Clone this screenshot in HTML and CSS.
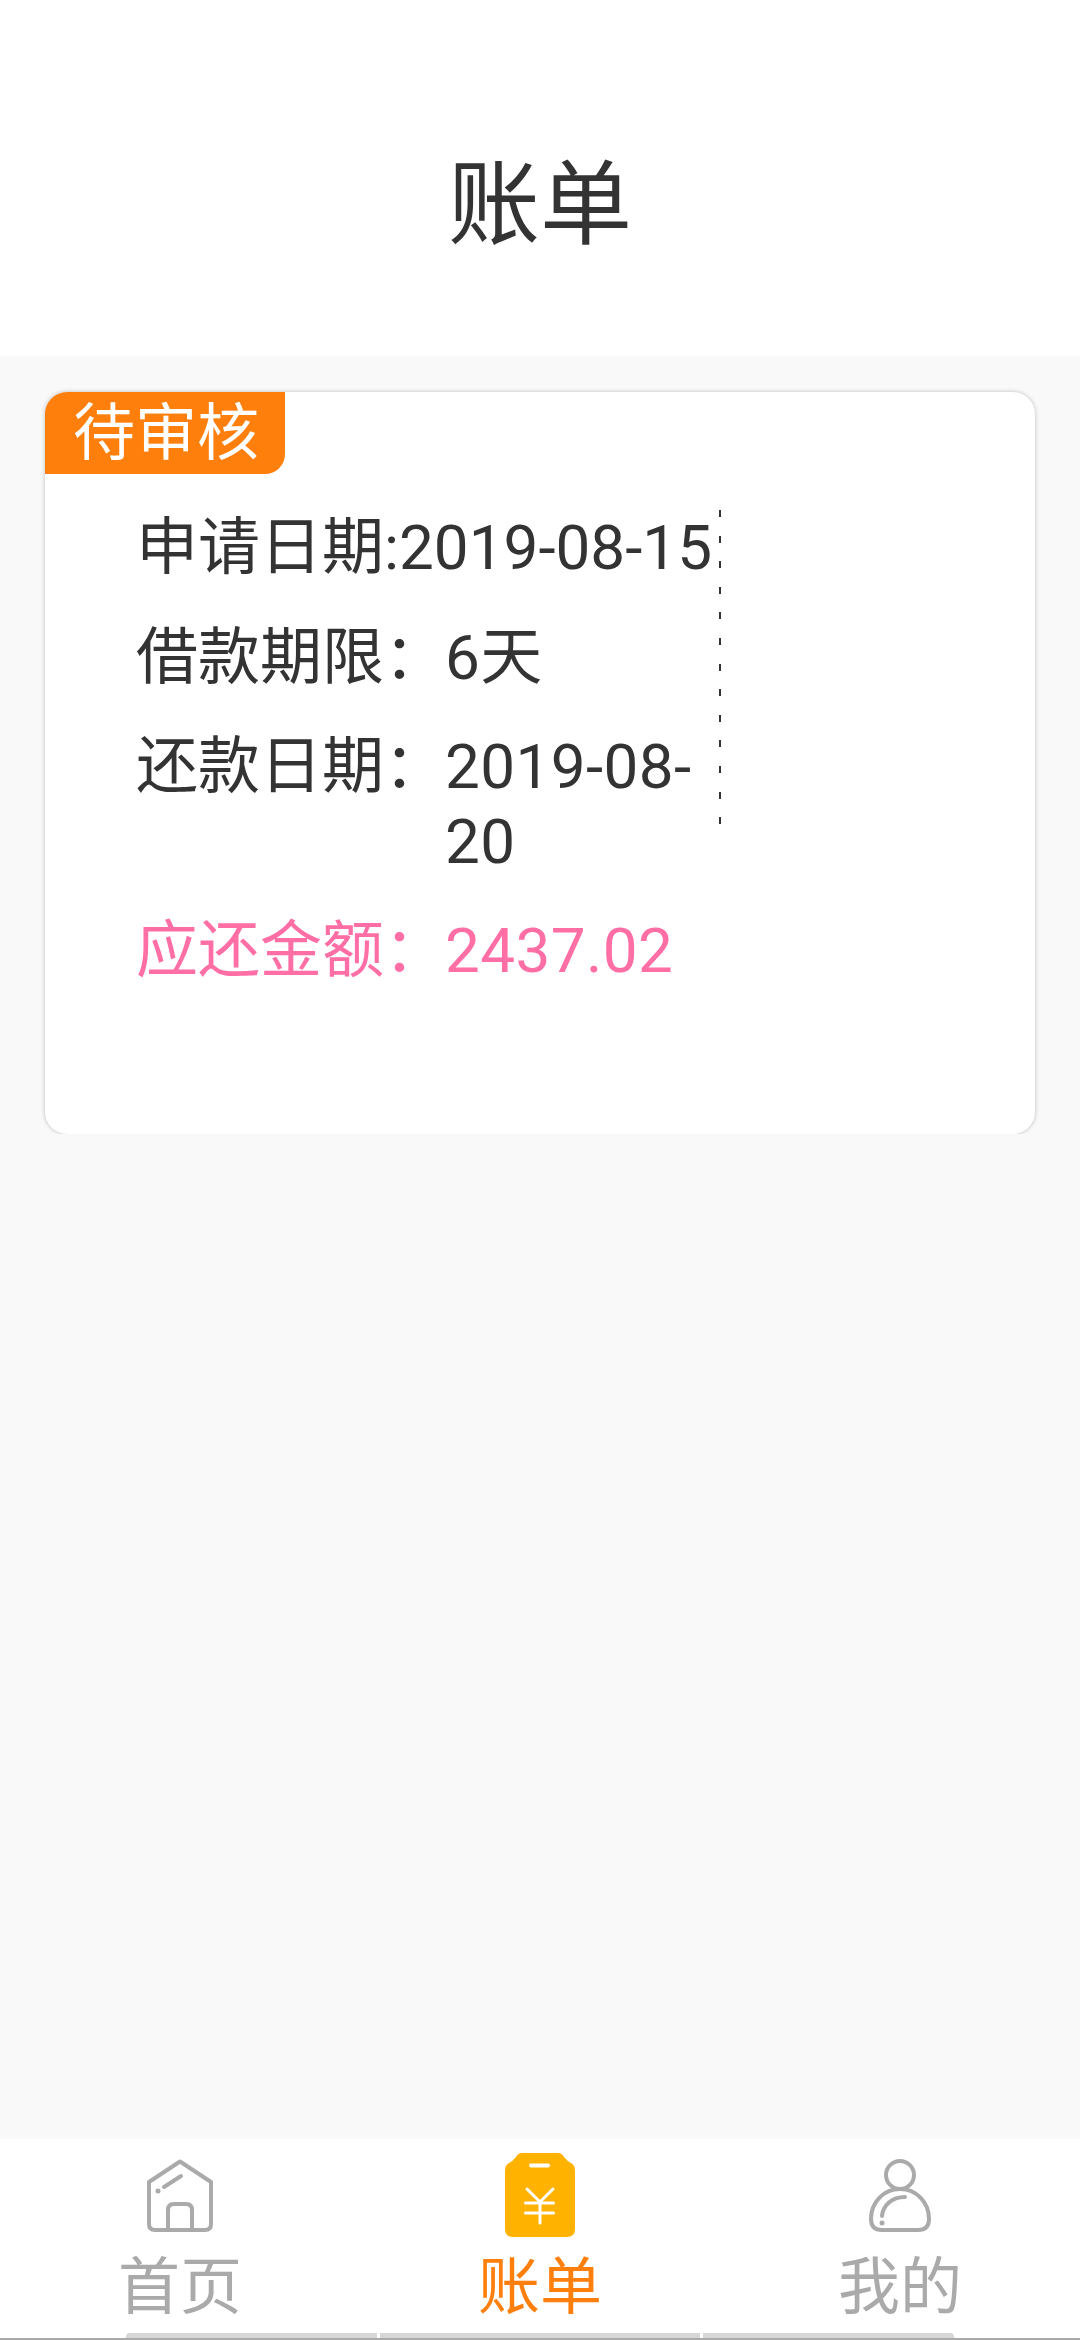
FILE: index.html
```html
<!DOCTYPE html>
<html lang="zh-CN">

<head>
    <meta charset="UTF-8">
    <meta name="viewport" content="width=device-width, initial-scale=1.0">
    <title>账单</title>
    <link rel="stylesheet" href="styles.css">
</head>

<body>
    <header class="top-bar">
        <h1>账单</h1>
    </header>

    <main class="content">
        <div class="card-clip">
            <div class="card">
                <div class="tag">待审核</div>
                <div class="divider"></div>
                <div class="info">
                    <p class="row-inline">申请日期:2019-08-15</p>
                    <div class="row">
                        <span class="label">借款期限：</span>
                        <span class="value">6天</span>
                    </div>
                    <div class="row">
                        <span class="label">还款日期：</span>
                        <span class="value">2019-08-20</span>
                    </div>
                    <div class="row row-pink">
                        <span class="label">应还金额：</span>
                        <span class="value">2437.02</span>
                    </div>
                </div>
            </div>
        </div>
    </main>

    <footer class="tab-bar">
        <div class="tabs">
            <div class="tab">
                <svg class="tab-icon" viewBox="0 0 80 84">
                    <path d="M9 29 L40 8.500 L71 29 V71 Q71 77 65 77 H15 Q9 77 9 71 Z" fill="none" stroke="#aaa" stroke-width="4" stroke-linejoin="round" />
                    <path d="M28 77 V57 Q28 51 34 51 H46 Q52 51 52 57 V77" fill="none" stroke="#aaa" stroke-width="4" />
                    <path d="M24 34 L41 23" fill="none" stroke="#aaa" stroke-width="4" stroke-linecap="round" />
                    <circle cx="18" cy="38" r="2.500" fill="#aaa" />
                </svg>
                <span>首页</span>
            </div>
            <div class="tab tab-active">
                <svg class="tab-icon" viewBox="0 0 80 84">
                    <path d="M22 0 H58 Q62 0 64 4 Q67 8 71 10 Q75 12 75 18 V76 Q75 84 67 84 H13 Q5 84 5 76 V18 Q5 12 9 10 Q13 8 16 4 Q18 0 22 0 Z" fill="#ffb300" />
                    <path d="M31 12.500 H48" fill="none" stroke="#fff" stroke-width="4" stroke-linecap="round" />
                    <path d="M27 36 L40 49 L53 36 M25.500 50 H53.500 M25.500 60 H53.500 M40 49 V70" fill="none" stroke="#fff" stroke-width="3" stroke-linecap="round" />
                </svg>
                <span>账单</span>
            </div>
            <div class="tab">
                <svg class="tab-icon" viewBox="0 0 80 84">
                    <circle cx="40" cy="22" r="14" fill="none" stroke="#aaa" stroke-width="4" />
                    <path d="M22 77 Q11 77 11 66 C11 49 24 36 40 36 C56 36 69 49 69 66 Q69 77 58 77 Z" fill="none" stroke="#aaa" stroke-width="4" />
                    <path d="M45 44 C31 44 23 53 22 63" fill="none" stroke="#aaa" stroke-width="4" stroke-linecap="round" />
                    <circle cx="22" cy="70" r="2.500" fill="#aaa" />
                </svg>
                <span>我的</span>
            </div>
        </div>
        <div class="home-strip">
            <div class="seg seg-left"></div>
            <div class="seg seg-mid"></div>
            <div class="seg seg-right"></div>
        </div>
    </footer>
</body>

</html>
```

FILE: styles.css
```css
/* General Styles */
body {
    margin: 0;
    width: 1080px;
    height: 2340px;
    display: flex;
    flex-direction: column;
    font-family: Roboto, "Noto Sans CJK SC", sans-serif;
    color: #333;
    background-color: #f9f9f9;
}

p {
    margin: 0;
}

/* Header */
.top-bar {
    height: 356px;
    box-sizing: border-box;
    padding-top: 151px;
    background: #ffffff;
    text-align: center;
}

.top-bar h1 {
    margin: 0;
    font-size: 92px;
    font-weight: normal;
    line-height: 110px;
}

/* Card */
.content {
    flex: 1;
    padding: 30px 39px 0;
}

/* the shadow is cut off under the card */
.card-clip {
    padding: 6px 6px 0;
    overflow: hidden;
}

.card {
    position: relative;
    height: 742px;
    background: #ffffff;
    border-radius: 22px;
    box-shadow: 0 0 4px rgba(0, 0, 0, 0.25);
    overflow: hidden;
}

.tag {
    width: 240px;
    height: 82px;
    box-sizing: border-box;
    padding-left: 28px;
    background-color: #ff7f0c;
    border-bottom-right-radius: 20px;
    color: #ffffff;
    font-size: 62px;
    line-height: 84px;
}

.divider {
    position: absolute;
    top: 118px;
    left: 674px;
    width: 2px;
    height: 314px;
    background: repeating-linear-gradient(#333 0, #333 7px, transparent 7px, transparent 25.6px);
}

.info {
    margin-top: 36px;
    padding-left: 91px;
    font-size: 62px;
    line-height: 75px;
}

.row-inline {
    white-space: nowrap;
}

.row {
    display: flex;
    margin-top: 35px;
}

.row + .row {
    margin-top: 34px;
}

.label {
    flex: none;
    width: 309px;
    white-space: nowrap;
}

.value {
    width: 262px;
    letter-spacing: 0.4px;
}

.row-pink {
    color: #ff6fa6;
}

/* Bottom tabs */
.tab-bar {
    height: 201px;
    background: #ffffff;
}

.tabs {
    display: flex;
    height: 194px;
}

.tab {
    flex: 1;
    display: flex;
    flex-direction: column;
    align-items: center;
    padding-top: 14px;
    box-sizing: border-box;
    font-size: 62px;
    line-height: 75px;
    color: #aaa;
}

.tab-active {
    color: #ff7f0c;
}

.tab-icon {
    width: 80px;
    height: 84px;
    margin-bottom: 13px;
}

.home-strip {
    display: flex;
    gap: 3px;
    height: 5px;
    padding-left: 126px;
    border-bottom: 2px solid #aaa;
}

.seg {
    height: 5px;
    background-color: #d6d6d6;
}

.seg-left {
    width: 251px;
    border-top-left-radius: 4px;
}

.seg-mid {
    width: 320px;
}

.seg-right {
    width: 251px;
    border-top-right-radius: 4px;
}
```
